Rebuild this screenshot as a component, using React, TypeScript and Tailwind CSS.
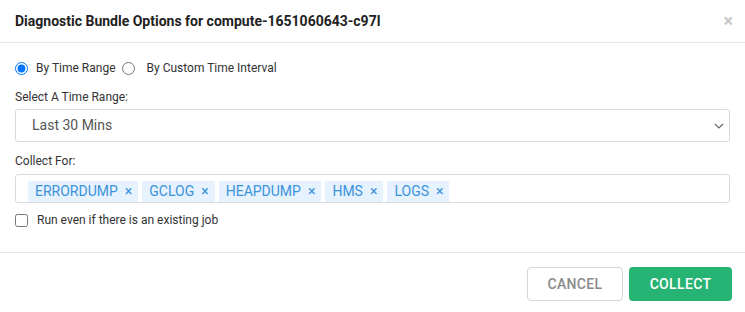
import React from 'react';

const tags = ['ERRORDUMP', 'GCLOG', 'HEAPDUMP', 'HMS', 'LOGS'];

const App: React.FC = () => {
  return (
    <div className="w-[745px] h-[312px] bg-white text-[#333] font-['Roboto',sans-serif]">
      {/* header */}
      <div className="flex items-center justify-between h-[43px] pl-[15px] pr-[12px] border-b border-[#e5e5e5]">
        <h4 className="text-[14px] font-bold text-[#222]">Diagnostic Bundle Options for compute-1651060643-c97l</h4>
        <button className="text-[#c8c8c8] text-[18px] leading-none font-bold">×</button>
      </div>

      {/* body */}
      <div className="px-[15px] pt-[15px] pb-[24px] border-b border-[#e5e5e5]">
        <div className="flex items-center h-[20px] text-[12px]">
          <input type="radio" name="range" defaultChecked className="w-[13px] h-[13px] m-0" />
          <span className="ml-[8px]">By Time Range</span>
          <input type="radio" name="range" className="w-[13px] h-[13px] m-0 ml-[6px]" />
          <span className="ml-[12px]">By Custom Time Interval</span>
        </div>

        <div className="mt-[11px] h-[16px] leading-[16px] text-[12px]">Select A Time Range:</div>
        <div className="mt-[4px] flex items-center justify-between h-[33px] border border-[#d9d9d9] rounded-[3px] pl-[16px] pr-[4px]">
          <span className="text-[14px] text-[#555]">Last 30 Mins</span>
          <svg width="10" height="6" viewBox="0 0 10 6" className="mr-[1px]">
            <path d="M1 1 L5 5 L9 1" fill="none" stroke="#666" strokeWidth="1.2" />
          </svg>
        </div>

        <div className="mt-[11px] h-[16px] leading-[16px] text-[12px]">Collect For:</div>
        <div className="mt-[5px] flex items-end h-[29px] border border-[#d9d9d9] rounded-[3px] pl-[12px] gap-[4px]">
          {tags.map((t) => (
            <span key={t} className="flex items-center h-[21px] bg-[#e6f2fd] text-[#3b93dc] text-[14px] pl-[7px] pr-[6px]">
              {t}
              <span className="ml-[7px] text-[14px]">×</span>
            </span>
          ))}
        </div>

        <div className="mt-[9px] flex items-center h-[16px] text-[12px]">
          <input type="checkbox" className="w-[13px] h-[13px] m-0" />
          <span className="ml-[9px]">Run even if there is an existing job</span>
        </div>
      </div>

      {/* footer */}
      <div className="flex justify-end gap-[6px] px-[13px] pt-[14px]">
        <button className="w-[96px] h-[34px] border border-[#d6d6d6] rounded-[4px] text-[14px] font-medium tracking-wide text-[#8a8a8a] bg-white">
          CANCEL
        </button>
        <button className="w-[103px] h-[34px] rounded-[4px] text-[14px] font-medium tracking-wide text-white bg-[#27b374]">
          COLLECT
        </button>
      </div>
    </div>
  );
};

export default App;
